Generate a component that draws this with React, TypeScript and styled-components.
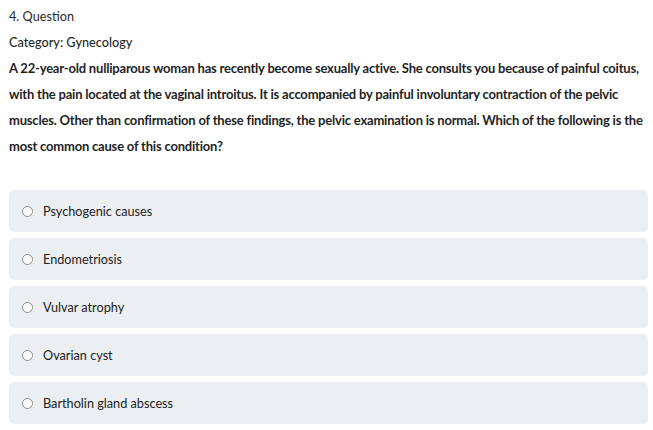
import styled, { createGlobalStyle } from "styled-components";

const Global = createGlobalStyle`
  body {
    margin: 0;
    background: #fff;
    font-family: Lato, "Open Sans", sans-serif;
    color: #222;
  }
`;

const Page = styled.div`
  padding: 3px 5px 0 9px;
`;

const Line = styled.div<{ $weight?: number }>`
  font-size: 12.7px;
  line-height: 26px;
  font-weight: ${(p) => p.$weight ?? 400};
  color: #2a2a2a;
`;

const Stem = styled.p`
  margin: 0;
  font-size: 13px;
  line-height: 26px;
  font-weight: 700;
  color: #1f1f1f;
  letter-spacing: -0.2px;
`;

const Options = styled.div`
  margin-top: 31px;
  display: flex;
  flex-direction: column;
  gap: 6px;
`;

const Option = styled.label`
  display: flex;
  align-items: center;
  height: 42px;
  padding-left: 13px;
  background: #eceff2;
  border-radius: 5px;
  font-size: 12.7px;
  color: #222;
  cursor: pointer;
`;

const Radio = styled.span`
  width: 9px;
  height: 9px;
  border: 1px solid #8a8a8a;
  border-radius: 50%;
  background: #fff;
  margin-right: 10px;
  flex-shrink: 0;
`;

const answers = [
  "Psychogenic causes",
  "Endometriosis",
  "Vulvar atrophy",
  "Ovarian cyst",
  "Bartholin gland abscess",
];

export default function App() {
  return (
    <>
      <Global />
      <Page>
        <Line>4. Question</Line>
        <Line $weight={500}>Category: Gynecology</Line>
        <Stem>
          A 22-year-old nulliparous woman has recently become sexually active. She consults you because of painful coitus,
          with the pain located at the vaginal introitus. It is accompanied by painful involuntary contraction of the pelvic
          muscles. Other than confirmation of these findings, the pelvic examination is normal. Which of the following is the
          most common cause of this condition?
        </Stem>
        <Options>
          {answers.map((a) => (
            <Option key={a}>
              <Radio />
              {a}
            </Option>
          ))}
        </Options>
      </Page>
    </>
  );
}
